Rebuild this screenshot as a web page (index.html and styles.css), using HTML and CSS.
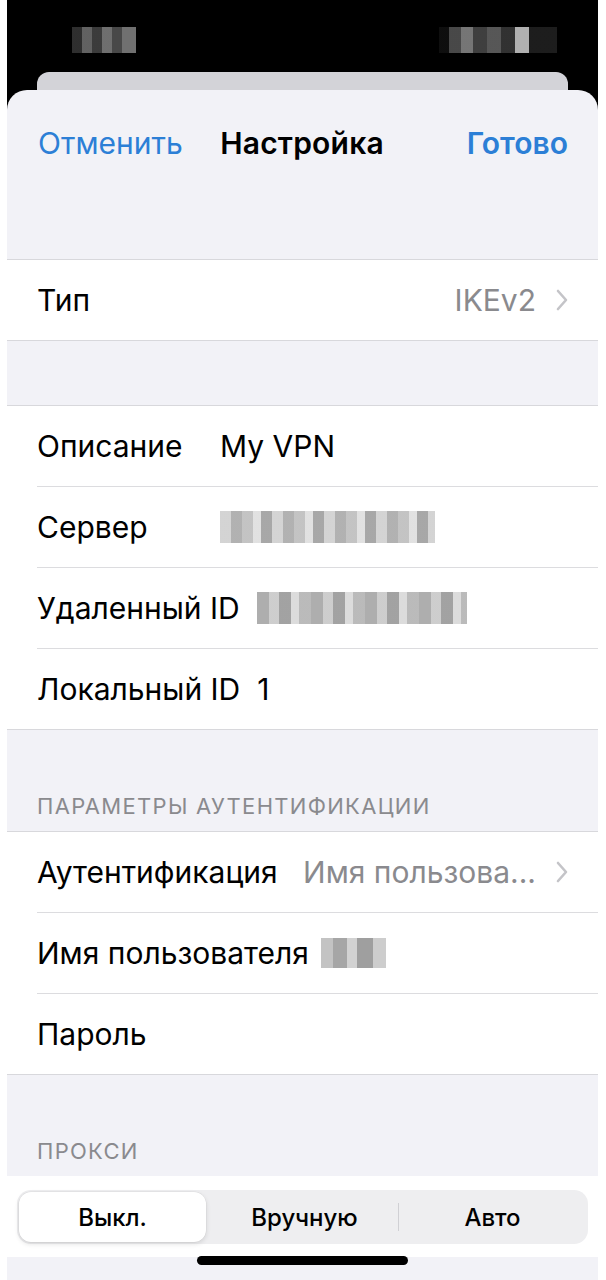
FILE: index.html
```html
<!DOCTYPE html>
<html lang="ru">
<head>
<meta charset="utf-8">
<title>Настройка VPN</title>
<link rel="stylesheet" href="styles.css">
</head>
<body>
<div class="phone">
  <div class="statusbar">
    <div class="blur blur-time"></div>
    <div class="blur blur-icons"></div>
  </div>
  <div class="backcard"></div>
  <div class="sheet">
    <div class="nav">
      <span class="nav-btn">Отменить</span>
      <span class="nav-title">Настройка</span>
      <span class="nav-btn nav-done">Готово</span>
    </div>

    <div class="group group-first">
      <div class="row">
        <span class="label">Тип</span>
        <span class="value-right">IKEv2</span>
        <svg class="chev" viewBox="0 0 12 22" width="12" height="22"><path d="M2 2 L10 11 L2 20" fill="none" stroke="#c4c4c8" stroke-width="2.6" stroke-linecap="round" stroke-linejoin="round"/></svg>
      </div>
    </div>

    <div class="group group-second">
      <div class="row">
        <span class="label label-fixed">Описание</span>
        <span class="value">My VPN</span>
      </div>
      <div class="row">
        <span class="label label-fixed">Сервер</span>
        <span class="blur blur-server"></span>
      </div>
      <div class="row">
        <span class="label">Удаленный ID</span>
        <span class="blur blur-remote"></span>
      </div>
      <div class="row">
        <span class="label">Локальный ID</span>
        <span class="value">1</span>
      </div>
    </div>

    <div class="header">Параметры аутентификации</div>
    <div class="group">
      <div class="row">
        <span class="label">Аутентификация</span>
        <span class="value-right">Имя пользова...</span>
        <svg class="chev" viewBox="0 0 12 22" width="12" height="22"><path d="M2 2 L10 11 L2 20" fill="none" stroke="#c4c4c8" stroke-width="2.6" stroke-linecap="round" stroke-linejoin="round"/></svg>
      </div>
      <div class="row">
        <span class="label label-tight">Имя пользователя</span>
        <span class="blur blur-user"></span>
      </div>
      <div class="row">
        <span class="label">Пароль</span>
      </div>
    </div>

    <div class="header">Прокси</div>
    <div class="seg-row">
      <div class="segmented">
        <div class="seg seg-active">Выкл.</div>
        <div class="seg">Вручную</div>
        <div class="seg-divider"></div>
        <div class="seg">Авто</div>
      </div>
    </div>
  </div>
  <div class="home-indicator"></div>
</div>
</body>
</html>
```

FILE: styles.css
```css
* { box-sizing: border-box; }

html, body {
  margin: 0;
  padding: 0;
  background: #ffffff;
}

body {
  font-family: Inter, "Noto Sans", "DejaVu Sans", sans-serif;
  -webkit-font-smoothing: antialiased;
}

.phone {
  position: relative;
  width: 591px;
  height: 1280px;
  margin-left: 7px;
  background: #000000;
  overflow: hidden;
  display: flex;
  flex-direction: column;
}

.statusbar {
  height: 72px;
  display: flex;
  justify-content: space-between;
  align-items: flex-start;
  padding: 27px 41px 0 65px;
}

.blur {
  display: inline-block;
}

.blur-time {
  width: 64px;
  height: 26px;
  background:
    linear-gradient(90deg, #3a3a3a 0 10px, #7a7a7a 10px 20px, #4a4a4a 20px 30px, #8a8a8a 30px 40px, #5a5a5a 40px 50px, #8c8c8c 50px 64px);
  opacity: 0.8;
}

.blur-icons {
  width: 118px;
  height: 26px;
  background:
    linear-gradient(90deg, #111 0 10px, #555 10px 22px, #8a8a8a 22px 34px, #4a4a4a 34px 48px, #666 48px 62px, #3a3a3a 62px 76px, #cfcfcf 76px 90px, #222 90px 118px);
  opacity: 0.85;
}

.backcard {
  height: 18px;
  margin: 0 30px 0 30px;
  background: #d3d3d8;
  border-radius: 12px 12px 0 0;
}

.sheet {
  flex: 1;
  background: #f2f2f7;
  border-radius: 20px 20px 0 0;
  display: flex;
  flex-direction: column;
}

.nav {
  height: 106px;
  display: flex;
  align-items: center;
  justify-content: space-between;
  padding: 0 30px 0 31px;
  font-size: 30px;
}

.nav-btn {
  color: #2c7fd6;
  width: 160px;
}

.nav-done {
  font-weight: 600;
  text-align: right;
}

.nav-title {
  font-weight: 600;
  color: #000;
  flex: 1;
  text-align: center;
  padding-right: 2px;
  letter-spacing: 0.2px;
}

.group {
  background: #ffffff;
  border-top: 1px solid #d8d8dc;
  border-bottom: 1px solid #d8d8dc;
}

.group-first {
  margin-top: 63px;
}

.group-second {
  margin-top: 64px;
}

.row {
  height: 81px;
  margin-left: 30px;
  padding-right: 30px;
  display: flex;
  align-items: center;
  border-bottom: 1px solid #dcdcdf;
  font-size: 30px;
  color: #000;
}

.row:last-child {
  border-bottom: none;
  height: 80px;
}

.label {
  margin-right: 17px;
}

.label-tight {
  margin-right: 12px;
}

.label-fixed {
  min-width: 166px;
}

.value {
  color: #000;
}

.value-right {
  margin-left: auto;
  color: #8a8a8e;
  margin-right: 20px;
}

.chev {
  display: block;
}

.blur-server {
  width: 215px;
  height: 32px;
  background:
    repeating-linear-gradient(90deg, #cfcfcf 0 11px, #a9a9a9 11px 22px, #bdbdbd 22px 33px, #dedede 33px 41px, #9e9e9e 41px 52px);
  opacity: 0.9;
}

.blur-remote {
  width: 210px;
  height: 32px;
  background:
    repeating-linear-gradient(90deg, #a5a5a5 0 12px, #c8c8c8 12px 22px, #989898 22px 34px, #d8d8d8 34px 42px, #b3b3b3 42px 54px);
  opacity: 0.9;
}

.blur-user {
  width: 65px;
  height: 30px;
  background:
    linear-gradient(90deg, #c3c3c3 0 12px, #a6a6a6 12px 26px, #d2d2d2 26px 36px, #9f9f9f 36px 52px, #cdcdcd 52px 65px);
}

.header {
  height: 101px;
  display: flex;
  align-items: flex-end;
  padding: 0 0 12px 30px;
  font-size: 22px;
  color: #8a8a8e;
  text-transform: uppercase;
  letter-spacing: 1.3px;
}

.seg-row {
  background: #ffffff;
  height: 81px;
  padding: 14px 10px 0 10px;
}

.segmented {
  height: 54px;
  background: #eeeef0;
  border-radius: 14px;
  padding: 2px;
  display: flex;
  align-items: center;
}

.seg {
  flex: 1;
  height: 50px;
  display: flex;
  align-items: center;
  justify-content: center;
  font-size: 24px;
  font-weight: 500;
  color: #000;
}

.seg-active {
  background: #ffffff;
  border-radius: 12px;
  margin-right: 5px;
  box-shadow: 0 2px 5px rgba(0, 0, 0, 0.12), 0 0 0 0.5px rgba(0, 0, 0, 0.06);
}

.seg-divider {
  width: 1px;
  height: 28px;
  background: #d0d0d4;
}

.home-indicator {
  position: absolute;
  left: 190px;
  top: 1256px;
  width: 211px;
  height: 9px;
  border-radius: 5px;
  background: #000000;
}
```
